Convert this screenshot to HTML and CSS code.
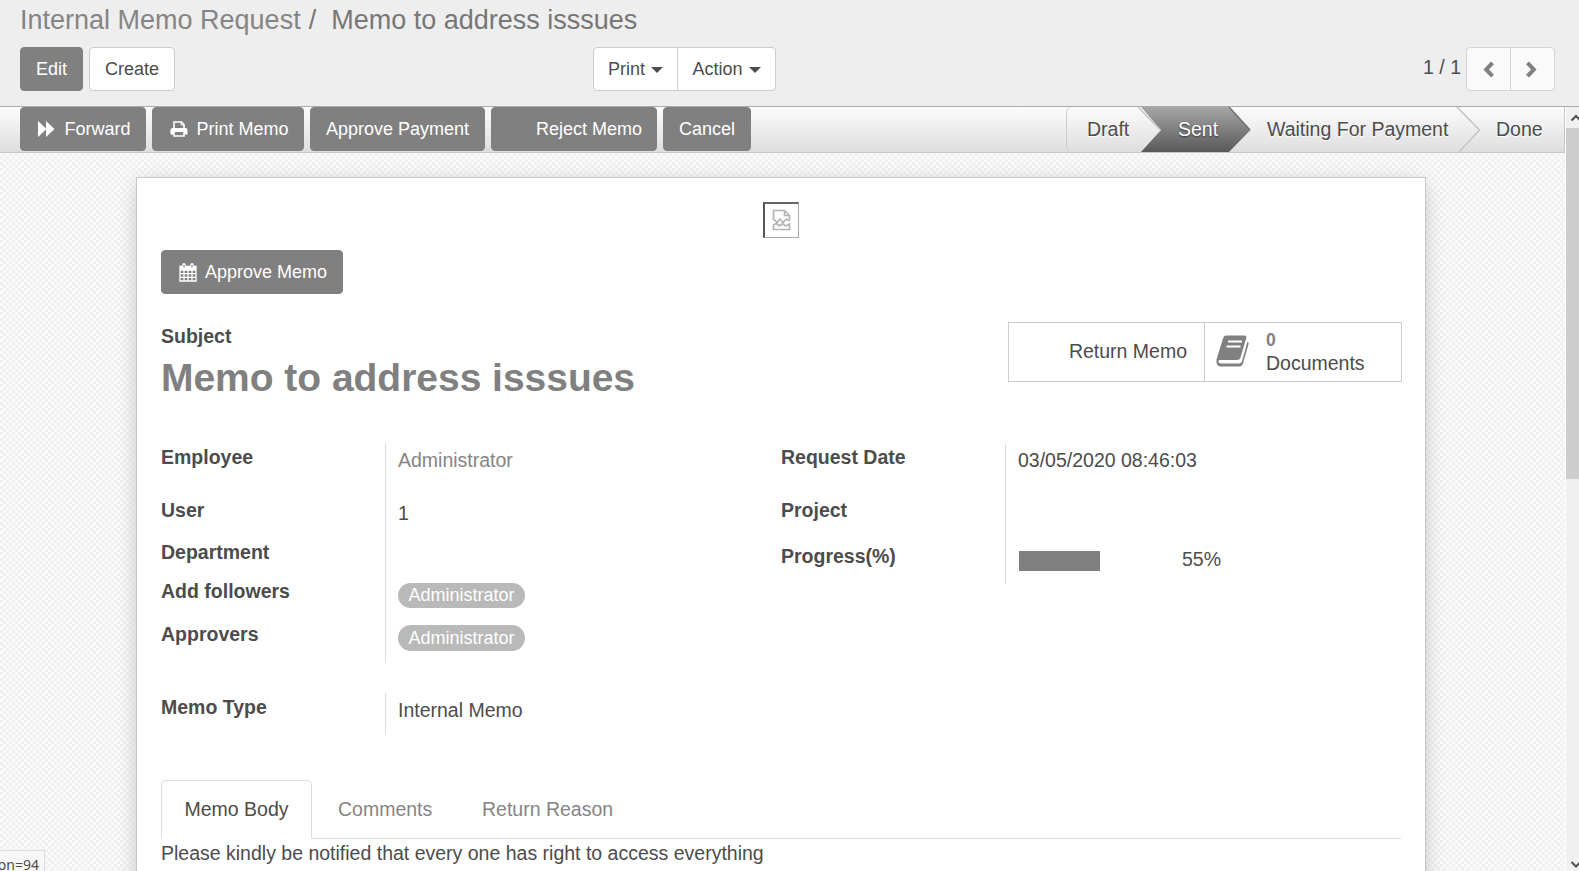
FILE: index.html
```html
<!DOCTYPE html>
<html lang="en">
<head>
<meta charset="utf-8">
<title>Memo to address isssues</title>
<link rel="stylesheet" href="styles.css">
</head>
<body>
<header class="panel">
  <h1 class="crumbs"><span class="crumb">Internal Memo Request</span><span class="sep">/</span><span class="current">Memo to address isssues</span></h1>
  <div class="toolbar">
    <div class="main-actions">
      <button class="btn primary edit">Edit</button>
      <button class="btn create">Create</button>
    </div>
    <div class="group menus">
      <button class="btn print">Print<i class="caret"></i></button>
      <button class="btn action">Action<i class="caret"></i></button>
    </div>
    <div class="pager">
      <span class="count">1 / 1</span>
      <div class="group nav">
        <button class="btn"><svg width="12" height="17" viewBox="0 0 12 17"><path d="M9.500 1.800 3.200 8.500l6.300 6.700" fill="none" stroke="#808080" stroke-width="4"/></svg></button>
        <button class="btn next"><svg width="12" height="17" viewBox="0 0 12 17"><path d="M2.500 1.800l6.300 6.700-6.300 6.700" fill="none" stroke="#808080" stroke-width="4"/></svg></button>
      </div>
    </div>
  </div>
</header>
<div class="view">
  <main class="form">
    <div class="statusbar">
      <div class="flow">
        <button class="btn primary forward"><svg width="18" height="16" viewBox="0 0 18 16"><path d="M0 0l8 7.500V0l8.500 8L8 16V8.500L0 16z" fill="#fff"/></svg><span>Forward</span></button>
        <button class="btn primary printmemo"><svg width="18" height="16" viewBox="0 0 18 16"><path d="M4 7.500V1h7.500L14 3.500v4" fill="none" stroke="#fff" stroke-width="1.600"/><path d="M11 1v3h3" fill="none" stroke="#fff"/><path d="M2.500 7h13Q17.500 7 17.500 9v4.500H14V11H4v2.500H.5V9q0-2 2-2z" fill="#fff"/><path d="M4 11v4h10v-4" fill="none" stroke="#fff" stroke-width="1.600"/></svg><span>Print Memo</span></button>
        <button class="btn primary approve-pay"><span>Approve Payment</span></button>
        <button class="btn primary reject"><span>Reject Memo</span></button>
        <button class="btn primary cancel"><span>Cancel</span></button>
      </div>
      <div class="stages">
        <div class="stage draft">Draft</div>
        <div class="stage sent">Sent</div>
        <div class="stage waiting">Waiting For Payment</div>
        <div class="stage done">Done</div>
        <svg class="arrows" width="499" height="46" viewBox="0 0 499 46">
          <defs>
            <linearGradient id="dark" x1="0" y1="0" x2="0" y2="1"><stop offset="0" stop-color="#a6a6a6"/><stop offset="1" stop-color="#595959"/></linearGradient>
          </defs>
          <path d="M75 0h88l21.500 23L163 45H75l20-22z" fill="url(#dark)"/>
          <path d="M72 0l22.500 23" fill="none" stroke="#c4c4c4" stroke-width="1.500"/>
          <path d="M163 0l21 23" fill="none" stroke="#707070" stroke-width="1.500"/>
          <path d="M391 0l22.500 23L393 45" fill="none" stroke="#c6c6c6" stroke-width="1.600"/>
          <path d="M4 .5Q.5 1 .5 5v35q0 4 3 5" fill="none" stroke="#ccc"/>
        </svg>
      </div>
    </div>
    <div class="backdrop">
      <section class="sheet">
        <div class="photo"><svg width="20" height="23" viewBox="0 0 20 23"><path d="M1.500 11V1.500h11l5 5V11M12.500 1.500v5h5M1.500 10l3.500 3.500 3-3.500 3 3.500 3.500-3.500 3 2" fill="none" stroke="#b4b4b4" stroke-width="1.700"/><path d="M1.500 16l3-1.500 3 2.500 3-2.500 3 2.500 4-2v5.500h-16z" fill="none" stroke="#b4b4b4" stroke-width="1.700"/></svg></div>
        <button class="btn primary approve"><svg width="18" height="19" viewBox="0 0 18 19"><path d="M1 3.500h16v14.500H1zM1 7h16M1 10.700h16M1 14.300h16M5 7v11M9 7v11M13 7v11" fill="none" stroke="#fff" stroke-width="1.300"/><path d="M1 3.500h16V7H1z" fill="#fff"/><path d="M5 1.800v3M13 1.800v3" stroke="#fff" stroke-width="3.400" stroke-linecap="round"/><path d="M5 1.800v3M13 1.800v3" stroke="#808080" stroke-width="1.100"/></svg><span>Approve Memo</span></button>
        <div class="heading">
          <div class="title">
            <label>Subject</label>
            <h2>Memo to address isssues</h2>
          </div>
          <div class="stats">
            <div class="stat return"><span>Return Memo</span></div>
            <div class="stat docs">
              <svg width="33" height="32" viewBox="0 0 33 32"><path d="M10 .5h18.500Q31 .5 30.300 3L24.500 22.500Q23.700 25 21 25H3.500Q2.300 25 2.300 26.500 2.500 28.500 5 28.500H23q2.300 0 2.900-2L31.500 6.500q1.500.8 1.100 2.500L27 28.500Q26 31.500 23 31.500H5Q1 31.500.5 27.500 0 25.500 1 23L7 3.500Q8 .5 10 .5z" fill="#808080"/><path d="M12 6.500h14M10.500 11.500h14" stroke="#fff" stroke-width="2"/></svg>
              <div><b>0</b><span>Documents</span></div>
            </div>
          </div>
        </div>
        <div class="columns">
          <div class="col">
            <dl class="fields first">
              <dt>Employee</dt><dd class="link">Administrator</dd>
              <dt>User</dt><dd>1</dd>
              <dt>Department</dt><dd></dd>
              <dt>Add followers</dt><dd><span class="tag follower">Administrator</span></dd>
              <dt>Approvers</dt><dd><span class="tag">Administrator</span></dd>
            </dl>
            <dl class="fields type">
              <dt>Memo Type</dt><dd><span class="type-value">Internal Memo</span></dd>
            </dl>
          </div>
          <div class="col">
            <dl class="fields second">
              <dt>Request Date</dt><dd><span class="date">03/05/2020 08:46:03</span></dd>
              <dt>Project</dt><dd></dd>
              <dt>Progress(%)</dt><dd class="progress"><span class="track"><i style="width:55%"></i></span><span>55%</span></dd>
            </dl>
          </div>
        </div>
        <nav class="tabs">
          <a class="tab active">Memo Body</a>
          <a class="tab comments">Comments</a>
          <a class="tab reason">Return Reason</a>
        </nav>
        <p class="body-text">Please kindly be notified that every one has right to access everything</p>
      </section>
    </div>
  </main>
  <div class="scroll">
    <svg width="14" height="21" viewBox="0 0 14 21"><path d="M5.500 13.500l4.500-4.500 4.500 4.500" fill="none" stroke="#505050" stroke-width="2"/></svg>
    <div class="thumb"></div>
    <svg class="down" width="14" height="15" viewBox="0 0 14 15"><path d="M5.500 6l4.500 4.500L14.500 6" fill="none" stroke="#505050" stroke-width="2"/></svg>
  </div>
</div>
<div class="link-hint">on=94</div>
</body>
</html>
```
FILE: styles.css
```css
* { box-sizing: border-box; }
body {
  margin: 0;
  width: 1579px;
  height: 871px;
  overflow: hidden;
  position: relative;
  font: 19.5px/28px "Liberation Sans", Arial, sans-serif;
  color: #4c4c4c;
  background: #fff;
}
h1, h2, p, dl, dd { margin: 0; }
svg { display: block; flex: none; }
.panel { height: 107px; padding: 4px 24px 0 20px; background: #eee; border-bottom: 1px solid #aaa; }
.crumbs { display: flex; height: 43px; font-size: 27px; line-height: 32px; font-weight: 400; color: #777; white-space: pre; }
.crumb { color: #858585; }
.sep { margin: 0 15px 0 8px; }
.toolbar { display: grid; grid-template-columns: 573px 1fr auto; }
.main-actions { display: flex; gap: 6px; }
.btn {
  display: flex; align-items: center; justify-content: center;
  height: 44px; margin: 0; padding: 0;
  border: 1px solid #ccc; border-radius: 4px;
  background: #fff; color: #4c4c4c;
  font: 18px/24px "Liberation Sans", Arial, sans-serif;
  white-space: nowrap;
}
.primary { background: #808080; border-color: #808080; color: #fff; }
.edit { width: 63px; }
.create { width: 86px; }
.group { display: flex; }
.group .btn:first-child { border-radius: 4px 0 0 4px; }
.group .btn:last-child { border-radius: 0 4px 4px 0; margin-left: -1px; }
.print { width: 85px; }
.action { width: 99px; }
.caret { margin: 2px 0 0 6px; border: 6px solid transparent; border-top-color: #4c4c4c; border-bottom: 0; }
.pager { display: flex; }
.count { margin-right: 5px; line-height: 40px; }
.nav .btn { width: 45px; background: #fafafa; border-color: #d4d4d4; }
.nav .next { padding-right: 3px; }
.view { display: flex; height: 764px; }
.form { width: 1565px; }
.statusbar {
  display: flex; justify-content: space-between;
  height: 46px; padding-left: 20px;
  border-bottom: 1px solid #c8c8c8; border-right: 1px solid #c8c8c8;
  background: linear-gradient(#fcfcfc, #dedede);
}
.flow { display: flex; gap: 6px; }
.forward { width: 126px; gap: 8px; padding-left: 3px; }
.printmemo { width: 152px; gap: 8px; padding-left: 3px; }
.approve-pay { width: 175px; }
.reject { width: 166px; justify-content: flex-end; padding-right: 14px; }
.cancel { width: 88px; }
.stages { position: relative; display: flex; width: 498px; line-height: 44px; text-shadow: 0 1px 1px #fff; white-space: nowrap; }
.stage { position: relative; z-index: 1; }
.draft { width: 76px; padding-left: 21px; }
.sent { width: 88px; padding-left: 36px; color: #fff; text-shadow: 0 1px 2px #333; }
.waiting { width: 229px; padding-left: 37px; }
.done { padding-left: 37px; }
.arrows { position: absolute; left: 0; top: 0; }
.backdrop {
  height: 718px; padding: 24px 0 0 136px; overflow: hidden;
  background: repeating-conic-gradient(#f0f0f0 0 25%, #fafafa 0 50%) 0 0 / 6px 6px;
}
.sheet {
  width: 1290px; height: 760px; padding: 24px 24px 0;
  background: #fff; border: 1px solid #c8c8c8;
  box-shadow: 0 5px 20px -3px rgba(0,0,0,.24);
}
.photo { width: 36px; height: 36px; margin: 0 auto 12px; display: flex; align-items: center; justify-content: center; border: 1px solid #aaa; border-top: 2px solid #666; border-left: 2px solid #555; }
.approve { width: 182px; gap: 8px; padding-left: 2px; }
.heading { display: flex; justify-content: space-between; padding-top: 28px; height: 149px; }
.title label { display: block; font-weight: 700; }
.title h2 { font-size: 39px; line-height: 56px; color: #808080; letter-spacing: -.03px; white-space: nowrap; }
.stats { display: flex; width: 394px; height: 60px; margin-right: -1px; border: 1px solid #ccc; }
.return { width: 196px; display: flex; align-items: center; justify-content: flex-end; padding: 0 17px 2px 0; border-right: 1px solid #ccc; }
.docs { display: flex; padding: 12px 0 0 11px; gap: 17px; }
.docs > div { display: flex; flex-direction: column; line-height: 23px; margin-top: -6px; }
.docs b { font-size: 17.5px; color: #808080; }
.columns { display: grid; grid-template-columns: 620px 1fr; height: 337px; }
.fields { display: grid; grid-template-columns: 224px 1fr; }
.first { grid-template-rows: 53px 42px 39px 43px 43px; margin-bottom: 30px; }
.second { grid-template-rows: 53px 46px 42px; }
.type { grid-template-rows: 42px; }
dt { font-weight: 700; white-space: nowrap; }
dd { padding: 3px 0 0 12px; border-left: 1px solid #ddd; white-space: nowrap; }
.link { color: #858585; }
.tag { display: block; width: 127px; height: 26px; margin-top: 2px; border-radius: 13px; background: #b9b9b9; color: #fff; font-size: 18px; line-height: 26px; text-align: center; }
.follower { height: 25px; margin-top: 3px; line-height: 24px; }
.progress { display: flex; padding: 1px 0 0 13px; }
.progress > span:last-child { padding-top: 2px; }
.track { width: 147px; height: 20px; margin: 8px 16px 0 0; }
.track i { display: block; height: 20px; background: #808080; }
.tabs { display: flex; height: 59px; border-bottom: 1px solid #ddd; }
.tab { height: 59px; line-height: 57px; color: #858585; white-space: nowrap; }
.active { width: 151px; text-align: center; color: #4c4c4c; background: #fff; border: 1px solid #ddd; border-bottom: 0; border-radius: 5px 5px 0 0; }
.comments { padding: 1px 0 0 26px; width: 145px; }
.reason { padding: 1px 0 0 25px; }
.body-text { white-space: nowrap; }
.scroll { width: 14px; height: 764px; display: flex; flex-direction: column; background: #f0f0f0; border-left: 1px solid #fff; overflow: hidden; }
.thumb { height: 351px; background: #cdcdcd; }
.down { margin-top: auto; }
.link-hint { position: absolute; left: 0; bottom: 0; width: 45px; height: 21px; padding-right: 5px; display: flex; justify-content: flex-end; border: 1px solid #ddd; border-width: 1px 1px 0 0; background: #f7f7f7; font: 14px/28px "Noto Sans", sans-serif; }
```
